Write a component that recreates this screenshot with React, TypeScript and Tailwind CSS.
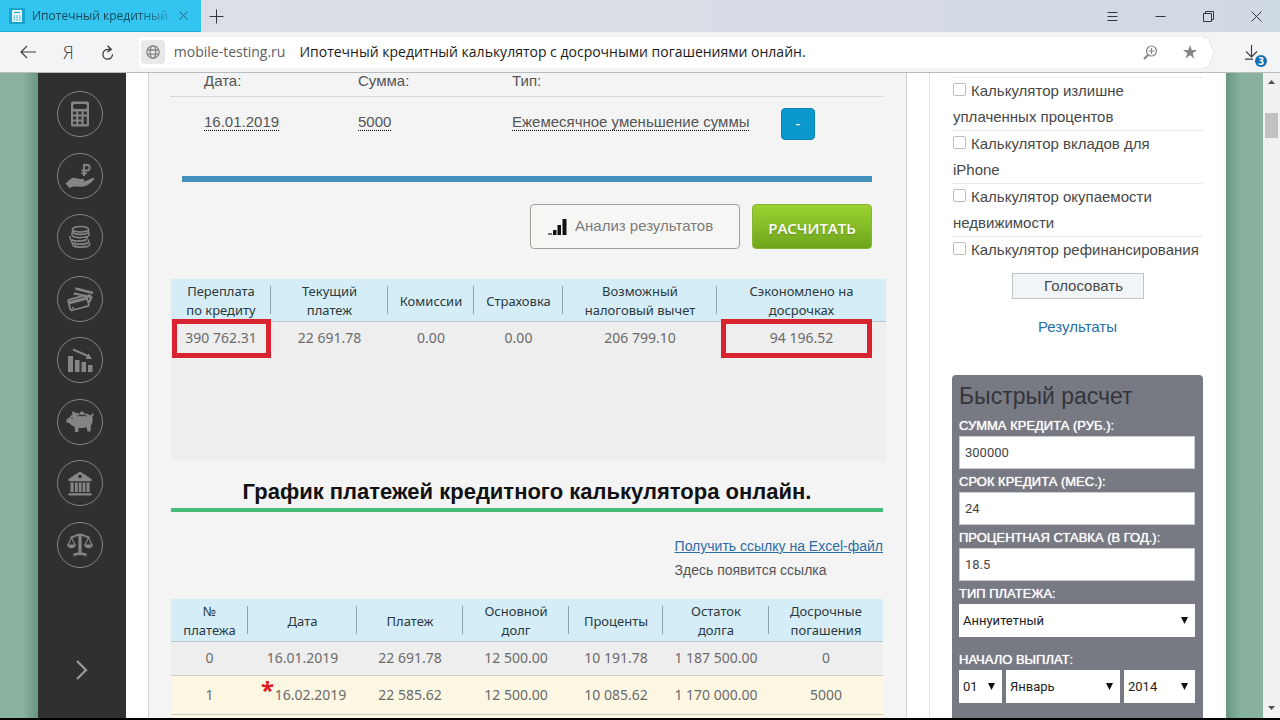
import type { ReactNode } from "react";

const UI_FONT = "font-['Open_Sans','Noto_Sans',sans-serif]";
const SANS = "font-['Liberation_Sans',Arial,sans-serif]";
const TABLE_FONT = "font-['Noto_Sans','Open_Sans',sans-serif]";

const SUMMARY = [
  { label: ["Переплата", "по кредиту"], value: "390 762.31", width: "w-[100px]", box: "left-px right-0" },
  { label: ["Текущий", "платеж"], value: "22 691.78", width: "w-[117px]" },
  { label: ["Комиссии"], value: "0.00", width: "w-[86px]" },
  { label: ["Страховка"], value: "0.00", width: "w-[89px]" },
  { label: ["Возможный", "налоговый вычет"], value: "206 799.10", width: "w-[154px]" },
  { label: ["Сэкономлено на", "досрочках"], value: "94 196.52", width: "", box: "left-1 right-[14px]" },
];

const SCHEDULE_HEAD = [
  { label: ["№", "платежа"], width: "w-[77px]" },
  { label: ["Дата"], width: "w-[109px]" },
  { label: ["Платеж"], width: "w-[106px]" },
  { label: ["Основной", "долг"], width: "w-[106px]" },
  { label: ["Проценты"], width: "w-[94px]" },
  { label: ["Остаток", "долга"], width: "w-[106px]" },
  { label: ["Досрочные", "погашения"], width: "" },
];

const SCHEDULE = [
  { cells: ["0", "16.01.2019", "22 691.78", "12 500.00", "10 191.78", "1 187 500.00", "0"], early: false },
  { cells: ["1", "16.02.2019", "22 585.62", "12 500.00", "10 085.62", "1 170 000.00", "5000"], early: true },
];

const POLL = [
  "Калькулятор излишне\nуплаченных процентов",
  "Калькулятор вкладов для\niPhone",
  "Калькулятор окупаемости\nнедвижимости",
  "Калькулятор рефинансирования",
];

const QUICK_FIELDS = [
  { id: "sum", label: "СУММА КРЕДИТА (РУБ.):", value: "300000" },
  { id: "term", label: "СРОК КРЕДИТА (МЕС.):", value: "24" },
  { id: "rate", label: "ПРОЦЕНТНАЯ СТАВКА (В ГОД.):", value: "18.5" },
];

const QUICK_LABEL = `block h-[23px] pt-[5px] text-[13px] leading-4 text-white text-shadow-[0_0_1px_#fff] ${SANS}`;

function CalculatorIcon() {
  return (
    <svg width="20" height="26" viewBox="0 0 20 26" fill="none" aria-hidden>
      <rect x="1" y="0.500" width="18" height="25" rx="1.500" fill="currentColor" />
      <rect x="3" y="3" width="14" height="5" rx="2" fill="#303030" />
      <g fill="#303030">
        <rect x="3" y="10.500" width="3.200" height="3" />
        <rect x="8.300" y="10.500" width="3.200" height="3" />
        <rect x="13.600" y="10.500" width="3.200" height="3" />
        <rect x="3" y="15.500" width="3.200" height="3" />
        <rect x="8.300" y="15.500" width="3.200" height="3" />
        <rect x="3" y="20.500" width="3.200" height="2.700" />
        <rect x="8.300" y="20.500" width="3.200" height="2.700" />
        <rect x="13.600" y="15.500" width="3.200" height="7.700" />
      </g>
    </svg>
  );
}

function HandIcon() {
  return (
    <svg width="30" height="26" viewBox="0 0 30 26" fill="none" aria-hidden>
      <path
        d="M0.500 20.500 L5 16.500 C7 14.500 9 14.200 11.500 15.200 C14 16.200 17 15.500 19 16.300 C20 17 19.200 18.200 18 18.500 C21 19 24 16 28.500 14.800 C29.500 15 29.300 16.300 28.300 17.200 C25 20.500 21.500 23.500 17 23.700 C13 23.900 10 23 7 24 L4.500 25 Z"
        fill="currentColor"
      />
      <path d="M19 13 V2 H22.200 C25.500 2 25.500 7.500 22.200 7.500 H16.500 M16.500 10.200 H22" stroke="currentColor" strokeWidth="1.900" />
    </svg>
  );
}

function CoinsIcon() {
  return (
    <svg width="24" height="24" viewBox="0 0 24 24" fill="#303030" stroke="currentColor" strokeWidth="1.500" aria-hidden>
      <path d="M4.500 17.500 v2 c0 3.800 17 3.800 17 0 v-2" />
      <path d="M3.500 14.500 v2 c0 3.800 17 3.800 17 0 v-2" />
      <path d="M2 11 v2.200 c0 3.800 17 3.800 17 0 v-2.200" />
      <path d="M4 7.500 v2.200 c0 3.800 17 3.800 17 0 v-2.200" />
      <path d="M4.500 4.500 v2.200 c0 3.500 16 3.500 16 0 v-2.200" />
      <ellipse cx="12.500" cy="4.300" rx="8" ry="2.800" />
      <path d="M6 8 c3 2 10 2 13 0 M5 11.200 c3 2 11 2 14 0 M4 14.600 c3 2 10 2 13 0 M6 17.600 c3 2 10 2 13 0 M7 20.500 c3 1.600 9 1.600 12 0" strokeDasharray="2 1" fill="none" />
    </svg>
  );
}

function CardsIcon() {
  return (
    <svg width="28" height="26" viewBox="0 0 28 26" fill="none" stroke="currentColor" aria-hidden>
      <path d="M9.500 2.500 L27 7" strokeWidth="2.400" />
      <path d="M8.500 9 L9 7.500 L25.500 11.500 L23 16.500" strokeWidth="2" />
      <path d="M21.500 9.500 L25 10.500" strokeWidth="3" />
      <rect x="3" y="11.500" width="19" height="11" rx="1.500" strokeWidth="1.800" transform="rotate(-15 12 17)" />
      <path d="M2.500 17 L21.500 12" strokeWidth="3" />
      <path d="M6 22 l2 -0.500" strokeWidth="1.500" />
    </svg>
  );
}

function DeclineIcon() {
  return (
    <svg width="28" height="26" viewBox="0 0 28 26" fill="currentColor" aria-hidden>
      <rect x="2" y="9" width="5" height="16" />
      <rect x="9" y="13" width="4.500" height="12" />
      <rect x="15.500" y="15" width="4.500" height="10" />
      <rect x="22" y="18" width="4.500" height="7" />
      <path d="M7 2.500 L22 9" stroke="currentColor" strokeWidth="2" />
      <path d="M22.500 6.500 L26 12 L19.500 12 Z" />
    </svg>
  );
}

function PiggyIcon() {
  return (
    <svg width="28" height="22" viewBox="0 0 28 22" fill="currentColor" aria-hidden>
      <path d="M0.500 8.200 L3.500 6.500 C4.500 5 5.200 4.300 6.500 3.500 L5.800 0.800 C7.500 0.500 9 1 10 2.200 C13 1.300 19 1.300 22.500 3.500 C24 4.300 25 4.500 26 3.800 C25.500 3 26 2 27 2.500 C28 3.500 27.500 5 26.300 5.700 C27.300 9 26.500 12 25 14.200 L24.500 20.500 H21.500 L20.500 16.200 C18 17 15 17 12.800 16.700 L12.200 21 H9 L8.700 16 C6.500 15 4.500 13.500 3.500 12.300 L0.500 11.500 Z" />
      <circle cx="16" cy="2.500" r="2.500" stroke="#303030" strokeWidth="0.800" />
      <path d="M11.500 5 C14.500 4 18 4 21 5.200" stroke="#303030" strokeWidth="0.900" fill="none" />
      <circle cx="6" cy="7.200" r="0.700" fill="#303030" />
    </svg>
  );
}

function BankIcon() {
  return (
    <svg width="24" height="25" viewBox="0 0 24 25" fill="currentColor" aria-hidden>
      <path fillRule="evenodd" d="M12 0.500 L23.500 8 V10.300 H0.500 V8 Z M12 3.800 a1.700 1.700 0 1 0 0.010 0 Z" />
      <path d="M2.500 11.500 h3.200 v9.500 h-3.200z M7 11.500 h2.700 v9.500 h-2.700z M10.800 11.500 h2.700 v9.500 h-2.700z M14.600 11.500 h2.700 v9.500 h-2.700z M18.400 11.500 h3.200 v9.500 h-3.200z" />
      <path d="M0.500 22.200 h23 v2.300 h-23z" />
    </svg>
  );
}

function ScalesIcon() {
  return (
    <svg width="28" height="24" viewBox="0 0 28 24" fill="none" stroke="currentColor" aria-hidden>
      <path d="M4.500 4.500 C8 4.500 9.500 1.500 14 1.500 C18.500 1.500 20 4.500 23.500 4.500" strokeWidth="2.200" />
      <path d="M14 1.500 V21" strokeWidth="3.200" />
      <path d="M7.500 22 Q14 19.500 20.500 22" strokeWidth="2.600" />
      <path d="M5.500 4.500 L2 12 M5.500 4.500 L9 12 M22.500 4.500 L19 12 M22.500 4.500 L26 12" strokeWidth="1.200" />
      <path d="M1 11.500 H10 C9.500 16.500 1.500 16.500 1 11.500 Z M18 11.500 H27 C26.500 16.500 18.500 16.500 18 11.500 Z" fill="currentColor" stroke="none" />
    </svg>
  );
}

const MENU: { title: string; icon: ReactNode }[] = [
  { title: "Кредитный калькулятор", icon: <CalculatorIcon /> },
  { title: "Займы", icon: <HandIcon /> },
  { title: "Вклады", icon: <CoinsIcon /> },
  { title: "Карты", icon: <CardsIcon /> },
  { title: "Графики", icon: <DeclineIcon /> },
  { title: "Накопления", icon: <PiggyIcon /> },
  { title: "Банки", icon: <BankIcon /> },
  { title: "Сравнение", icon: <ScalesIcon /> },
];

function TabBar() {
  return (
    <div className="flex h-8 shrink-0 items-center bg-linear-to-r from-[#dcdfe6] via-[#dbdde7] to-[#cfd9e4] text-[#34393f]">
      <div className="flex h-8 w-[201px] items-center border-b border-[#22a6d0] bg-[#33c4f0] pl-[9px]">
        <svg width="16" height="16" viewBox="0 0 16 16" aria-hidden>
          <rect width="16" height="16" fill="#17a5d0" />
          <rect x="3" y="2" width="10" height="12" rx="1" fill="#e8f8fd" />
          <path d="M5 4.500h6M4.500 8h1.500M7.300 8h1.500M10 8h1.500M4.500 10h1.500M7.300 10h1.500M10 10h1.500M4.500 12h1.500M7.300 12h1.500M10 12h1.500" stroke="#17a5d0" strokeWidth="1.200" />
        </svg>
        <span className="ml-[7px] bg-linear-to-r from-[#17485a] from-75% to-[#2899be] bg-clip-text text-xs whitespace-nowrap text-transparent">
          Ипотечный кредитный
        </span>
        <button type="button" aria-label="Закрыть вкладку" className="mr-[13px] ml-auto">
          <svg width="9" height="9" viewBox="0 0 9 9" stroke="#1b5c74" aria-hidden>
            <path d="M0.500 0.500l8 8M8.500 0.500l-8 8" />
          </svg>
        </button>
      </div>
      <button type="button" aria-label="Новая вкладка" className="ml-2">
        <svg width="15" height="15" viewBox="0 0 15 15" stroke="currentColor" aria-hidden>
          <path d="M7.500 0.500v14M0.500 7.500h14" />
        </svg>
      </button>
      <div className="ml-auto flex items-center gap-[37px] pr-[18px]">
        <button type="button" aria-label="Меню">
          <svg width="11" height="11" viewBox="0 0 11 11" stroke="currentColor" aria-hidden>
            <path d="M0.500 1.500h10M0.500 5.500h10M0.500 9.500h10" />
          </svg>
        </button>
        <button type="button" aria-label="Свернуть">
          <svg width="11" height="11" viewBox="0 0 11 11" stroke="currentColor" aria-hidden>
            <path d="M0.500 5.500h10" />
          </svg>
        </button>
        <button type="button" aria-label="Развернуть">
          <svg width="11" height="11" viewBox="0 0 11 11" fill="none" stroke="currentColor" aria-hidden>
            <path d="M0.500 2.500h8v8h-8zM2.500 2.500V0.500h8V8.500H8.500" />
          </svg>
        </button>
        <button type="button" aria-label="Закрыть">
          <svg width="11" height="11" viewBox="0 0 11 11" stroke="currentColor" aria-hidden>
            <path d="M0.500 0.500l10 10M10.500 0.500l-10 10" />
          </svg>
        </button>
      </div>
    </div>
  );
}

function AddressBar() {
  return (
    <div className="flex h-[41px] shrink-0 items-center border-b border-[#b9bcbd] bg-[#f3f4f6] text-[#3d3f42]">
      <button type="button" aria-label="Назад" className="ml-5">
        <svg width="16" height="14" viewBox="0 0 16 14" fill="none" stroke="currentColor" strokeWidth="1.200" aria-hidden>
          <path d="M16 7H1M7 1L1 7l6 6" />
        </svg>
      </button>
      <button type="button" aria-label="Яндекс" className="ml-[27px] text-lg leading-5 font-light">
        Я
      </button>
      <button type="button" aria-label="Обновить" className="ml-[27px]">
        <svg width="14" height="15" viewBox="0 0 14 15" fill="none" stroke="currentColor" strokeWidth="1.300" aria-hidden>
          <path d="M9.500 4.500H6.500A4.800 4.800 0 1 0 11.500 9.300M6.500 0.700L10.300 4.500L6.500 7" />
        </svg>
      </button>
      <div className="ml-6 flex h-[31px] flex-1 items-center rounded-l-sm bg-white">
        <span className="ml-[2px] flex size-6 items-center justify-center rounded-sm bg-[#e9e9e9]">
          <svg width="14" height="14" viewBox="0 0 14 14" fill="none" stroke="#858585" strokeWidth="1.300" aria-hidden>
            <circle cx="7" cy="7" r="6.200" />
            <ellipse cx="7" cy="7" rx="2.800" ry="6.200" />
            <path d="M1 5h12M1 9.200h12" />
          </svg>
        </span>
        <a href="#" className="ml-[9px] text-sm text-[#5c6063]">
          mobile-testing.ru
        </a>
        <span className="ml-[14px] text-sm text-[#1b1b1b]">
          Ипотечный кредитный калькулятор с досрочными погашениями онлайн.
        </span>
        <div className="ml-auto flex items-center gap-[25px] pr-1.5">
          <button type="button" aria-label="Масштаб">
            <svg width="15" height="15" viewBox="0 0 15 15" fill="none" stroke="#858585" strokeWidth="1.200" aria-hidden>
              <circle cx="8.500" cy="6" r="5" />
              <path d="M8.500 3v6M5.500 6h6" />
              <path d="M5 10l-4 4" strokeWidth="2.200" />
            </svg>
          </button>
          <button type="button" aria-label="В закладки">
            <svg width="14" height="14" viewBox="0 0 14 14" fill="#858585" aria-hidden>
              <path d="M7 0l1.700 5H14L9.700 8.200 11.300 13.400 7 10.200 2.700 13.400 4.300 8.200 0 5h5.300z" />
            </svg>
          </button>
        </div>
      </div>
      <svg width="12" height="31" viewBox="0 0 12 31" fill="#fff" stroke="#e4e6e8" aria-hidden>
        <path d="M0 0.500h3q1.500 0 2.300 1.500l5.700 12.500q0.500 1 0 2L5.300 29q-0.800 1.500-2.300 1.500H0" />
      </svg>
      <button type="button" aria-label="Загрузки" className="relative mr-[22px] ml-[30px]">
        <svg width="13" height="15" viewBox="0 0 13 15" fill="none" stroke="currentColor" strokeWidth="1.200" aria-hidden>
          <path d="M6.500 0v11.500M1 6.500l5.500 5.500L12 6.500M0 14.200h8" />
        </svg>
        <span className="absolute top-[10px] left-[10px] flex size-3 items-center justify-center rounded-full bg-[#1470b4] text-[10px] leading-3 font-bold text-white">
          3
        </span>
      </button>
    </div>
  );
}

function Sidebar() {
  return (
    <nav className="flex w-[88px] shrink-0 flex-col items-center bg-[#303030] pt-[18px] text-[#858585]">
      <div className="flex h-[477px] flex-col justify-between">
        {MENU.map((item) => (
          <a
            key={item.title}
            href="#"
            title={item.title}
            aria-label={item.title}
            className="ml-[-4px] flex size-[46px] items-center justify-center rounded-full border border-[#858585]"
          >
            {item.icon}
          </a>
        ))}
      </div>
      <button type="button" aria-label="Показать меню" className="mt-[92px]">
        <svg width="12" height="20" viewBox="0 0 12 20" fill="none" stroke="#9a9a9a" strokeWidth="2.200" aria-hidden>
          <path d="M1 1l9 9-9 9" />
        </svg>
      </button>
    </nav>
  );
}

function HeadCell({ label, width, last }: { label: string[]; width: string; last: boolean }) {
  return (
    <th className={`${width} relative h-[42px] border-b border-[#bfc6ca] p-0 pt-[3px] align-middle font-normal`}>
      {label.map((line) => (
        <span key={line} className="block">
          {line}
        </span>
      ))}
      {!last && <span className="absolute top-[7px] right-0 h-7 w-px bg-[#8fa3ad]" aria-hidden />}
    </th>
  );
}

function SummaryTable() {
  return (
    <div className={`mt-[30px] mr-[20px] ml-[22px] h-[182px] bg-[#eeeeee] ${TABLE_FONT}`}>
      <table className="w-full table-fixed border-collapse text-center">
        <thead className="bg-[#d5edf6] text-[13px] leading-[19px] text-[#2b3940]">
          <tr>
            {SUMMARY.map((col, i) => (
              <HeadCell key={i} label={col.label} width={col.width} last={i === SUMMARY.length - 1} />
            ))}
          </tr>
        </thead>
        <tbody className="text-sm text-[#6b6b6b]">
          <tr>
            {SUMMARY.map((col, i) => (
              <td key={i} className="relative h-[34px] p-0">
                {col.value}
                {col.box && (
                  <span className={`absolute -top-[3px] h-[39px] border-5 border-[#d9232e] ${col.box}`} aria-hidden />
                )}
              </td>
            ))}
          </tr>
        </tbody>
      </table>
    </div>
  );
}

function ScheduleTable() {
  return (
    <table className={`mt-[17px] w-full table-fixed border-collapse text-center ${TABLE_FONT}`}>
      <thead className="bg-[#d5edf6] text-[13px] leading-[19px] text-[#2b3940]">
        <tr>
          {SCHEDULE_HEAD.map((col, i) => (
            <HeadCell key={i} label={col.label} width={col.width} last={i === SCHEDULE_HEAD.length - 1} />
          ))}
        </tr>
      </thead>
      <tbody className="text-sm text-[#6b6b6b]">
        {SCHEDULE.map((row) => (
          <tr key={row.cells[0]} className={row.early ? "h-[39px] bg-[#fcf7e3]" : "h-[34px] bg-[#eeeeee]"}>
            {row.cells.map((cell, i) => (
              <td key={i} className="relative border-b border-[#cfccc2] p-0">
                {row.early && i === 1 ? (
                  <span className="pl-4">
                    <span className="absolute top-0 left-[13px] text-2xl leading-7 font-bold text-[#e01b22]">*</span>
                    {cell}
                  </span>
                ) : (
                  cell
                )}
              </td>
            ))}
          </tr>
        ))}
        <tr className="h-9 bg-[#fcf7e3]">
          <td colSpan={7} />
        </tr>
      </tbody>
    </table>
  );
}

function Calculator() {
  return (
    <main className={`flex-1 overflow-hidden border-x border-[#d2d2d2] bg-[#f4f4f4] ${SANS}`}>
      <table className="ml-[21px] w-[calc(100%-44px)] table-fixed border-collapse text-left text-[15px] text-[#555555]">
        <thead>
          <tr className="h-[23px] border-b border-[#d6d6d6]">
            <th className="w-[188px] p-0 pb-[6px] pl-[34px] leading-4 font-normal">Дата:</th>
            <th className="w-[154px] p-0 pb-[6px] leading-4 font-normal">Сумма:</th>
            <th className="w-[269px] p-0 pb-[6px] leading-4 font-normal">Тип:</th>
            <th className="p-0" />
          </tr>
        </thead>
        <tbody>
          <tr className="h-[55px]">
            <td className="p-0 pb-1 pl-[34px]">
              <a href="#" className="border-b border-dotted border-black">16.01.2019</a>
            </td>
            <td className="p-0 pb-1">
              <a href="#" className="border-b border-dotted border-black">5000</a>
            </td>
            <td className="p-0 pb-1 whitespace-nowrap">
              <a href="#" className="border-b border-dotted border-black">Ежемесячное уменьшение суммы</a>
            </td>
            <td className="p-0">
              <button type="button" className="block h-8 w-[34px] rounded-sm border border-[#0b86b4] bg-[#0a99cd] text-base text-white">
                -
              </button>
            </td>
          </tr>
        </tbody>
      </table>

      <div className="mt-[25px] mr-[34px] ml-[33px] h-[6px] bg-[#448fbb]" />
      <div className="mt-[22px] mr-[34px] flex justify-end gap-3">
        <button
          type="button"
          className="flex h-[45px] w-[210px] items-center gap-2 rounded-sm border border-[#9ba494] bg-[#f6f7f4] pl-[17px] text-[15px] text-[#7b7b7b]"
        >
          <svg width="19" height="16" viewBox="0 0 19 16" fill="#111" aria-hidden>
            <rect x="0" y="14" width="4" height="2" fill="#777" />
            <rect x="5" y="11" width="3.500" height="5" />
            <rect x="9.500" y="6" width="3.500" height="10" />
            <rect x="14.500" y="0" width="4" height="16" />
          </svg>
          Анализ результатов
        </button>
        <button
          type="button"
          className={`h-[45px] w-[120px] rounded-sm border border-[#86b52f] bg-linear-to-b from-[#9bd230] to-[#6fa51d] pt-1 text-[15px] font-semibold text-white text-shadow-sm ${UI_FONT}`}
        >
          РАСЧИТАТЬ
        </button>
      </div>

      <SummaryTable />

      <div className="mr-[23px] ml-[22px]">
        <h2 className="mt-[18px] border-b-4 border-[#43bd79] pb-[3px] text-center text-[22px] leading-[26px] font-bold text-[#111]">
          График платежей кредитного калькулятора онлайн.
        </h2>
        <div className="mt-[22px] flex justify-end">
          <div className="text-sm leading-6 text-[#555555]">
            <a href="#" className="block text-[#2d6ca6] underline">
              Получить ссылку на Excel-файл
            </a>
            Здесь появится ссылка
          </div>
        </div>
        <ScheduleTable />
      </div>
    </main>
  );
}

function QuickSelect({ id, label, value, className }: { id: string; label?: string; value: string; className: string }) {
  return (
    <div className={`relative ${className}`}>
      <select
        id={id}
        aria-label={label}
        defaultValue={value}
        className="h-[33px] w-full appearance-none bg-white pl-1 text-[13px] text-[#222]"
      >
        <option>{value}</option>
      </select>
      <svg width="7" height="7" viewBox="0 0 7 7" className="pointer-events-none absolute top-[13px] right-[7px]" aria-hidden>
        <path d="M0 0h7L3.500 7z" fill="#111" />
      </svg>
    </div>
  );
}

function QuickCalc() {
  return (
    <form className="mt-[38px] h-[400px] rounded-t-sm bg-[#787a83] px-2 pl-[7px] font-['Roboto',sans-serif]">
      <h3 className={`h-[38px] pt-[7px] text-[23px] leading-7 text-[#33353c] ${SANS}`}>Быстрый расчет</h3>
      {QUICK_FIELDS.map((field) => (
        <div key={field.id}>
          <label htmlFor={field.id} className={QUICK_LABEL}>
            {field.label}
          </label>
          <input
            id={field.id}
            type="text"
            defaultValue={field.value}
            className="block h-[33px] w-full border border-[#c9ccd3] bg-white px-[5px] text-[13px] text-[#444]"
          />
        </div>
      ))}
      <label htmlFor="type" className={QUICK_LABEL}>
        ТИП ПЛАТЕЖА:
      </label>
      <QuickSelect id="type" value="Аннуитетный" className="w-full" />
      <label htmlFor="day" className={`mt-[10px] ${QUICK_LABEL}`}>
        НАЧАЛО ВЫПЛАТ:
      </label>
      <div className="flex gap-1">
        <QuickSelect id="day" value="01" className="w-[43px]" />
        <QuickSelect id="month" label="Месяц" value="Январь" className="flex-1" />
        <QuickSelect id="year" label="Год" value="2014" className="w-[71px]" />
      </div>
    </form>
  );
}

function Aside() {
  return (
    <aside className={`ml-[22px] w-[297px] shrink-0 overflow-hidden border-l border-[#e4e4e4] bg-white pt-1 pr-[23px] pl-[22px] text-[15px] text-[#484848] ${SANS}`}>
      {POLL.map((option, i) => (
        <label key={option} className="block border-t border-[#e9ecee] pl-px leading-[26px] whitespace-pre-line">
          <input
            type="checkbox"
            name={`poll-${i}`}
            className="mr-[5px] inline-block size-[13px] appearance-none rounded-xs border border-[#bcbcbc] bg-white"
          />
          {option}
        </label>
      ))}
      <div className="mt-[10px] flex flex-col items-center">
        <button type="button" className="h-[26px] w-[132px] border border-[#bfc4c7] bg-[#f2f5f8] pl-3">
          Голосовать
        </button>
        <a href="#" className="mt-[18px] leading-5 text-[#1f6fa9]">
          Результаты
        </a>
      </div>
      <QuickCalc />
    </aside>
  );
}

function Scrollbar() {
  return (
    <div className="flex w-[17px] shrink-0 flex-col items-center bg-[#f1f1f1]" aria-hidden>
      <svg width="7" height="4" viewBox="0 0 7 4" className="mt-[7px]">
        <path d="M0 4h7L3.500 0z" fill="#505050" />
      </svg>
      <div className="mt-[29px] h-[25px] w-[13px] bg-[#c1c1c1]" />
      <svg width="7" height="4" viewBox="0 0 7 4" className="mt-auto mb-2">
        <path d="M0 0h7L3.500 4z" fill="#505050" />
      </svg>
    </div>
  );
}

export default function App() {
  return (
    <div className={`flex h-screen flex-col overflow-hidden bg-black pb-[2px] ${UI_FONT}`}>
      <TabBar />
      <AddressBar />
      <div className="flex min-h-0 flex-1 bg-white">
        <div className="w-[38px] shrink-0 bg-linear-to-r from-[#8ab2a0] from-60% to-[#6a9583]" />
        <Sidebar />
        <div className="flex min-w-0 flex-1 pl-[22px]">
          <Calculator />
          <Aside />
        </div>
        <div className="w-[37px] shrink-0 bg-linear-to-r from-[#6a9583] to-[#88b19f] to-40%" />
        <Scrollbar />
      </div>
    </div>
  );
}
